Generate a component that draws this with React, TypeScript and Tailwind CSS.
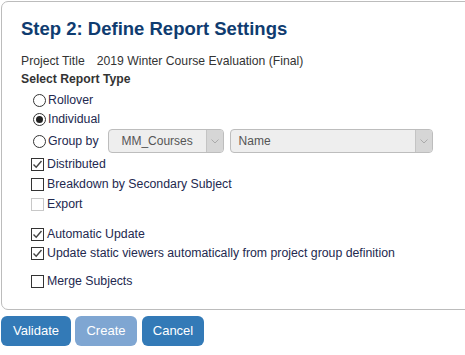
type Opt = { label: string; checked?: boolean; disabled?: boolean };

const font = { fontFamily: '"Liberation Sans", Arial, sans-serif' };

const Radio = ({ label, checked }: Opt) => (
  <div className="flex items-center h-[19px]">
    <span className="w-[13px] h-[13px] rounded-full border border-[#333] bg-white flex items-center justify-center">
      {checked && <span className="w-[7px] h-[7px] rounded-full bg-[#222]" />}
    </span>
    <span className="ml-[2px] text-[12.3px] text-[#23294f]">{label}</span>
  </div>
);

const Check = ({ label, checked, disabled }: Opt) => (
  <div className="flex items-center h-[19px]">
    <span
      className={
        disabled
          ? "w-[13px] h-[13px] border border-[#c8c8c8] bg-white"
          : "w-[13px] h-[13px] border border-[#333] bg-white flex items-center justify-center"
      }
    >
      {checked && (
        <svg width="11" height="11" viewBox="0 0 11 11">
          <path d="M1.5 5.5 L4.2 8.2 L9.5 2" fill="none" stroke="#444" strokeWidth="1.4" />
        </svg>
      )}
    </span>
    <span className="ml-[3px] text-[12.3px] text-[#23294f]">{label}</span>
  </div>
);

const Select = ({ value, width, center }: { value: string; width: string; center?: boolean }) => (
  <div className={`${width} h-[24px] flex rounded-[4px] border border-[#bdbdbd] bg-[#eeeeee] overflow-hidden`}>
    <span className={center ? "flex-1 flex items-center justify-center text-[12px] text-[#555]" : "flex-1 flex items-center pl-[8px] text-[12px] text-[#555]"}>
      {value}
    </span>
    <span className="w-[17px] bg-[#d6d6d6] border-l border-[#c4c4c4] flex items-center justify-center">
      <svg width="8" height="5" viewBox="0 0 8 5">
        <path d="M0.5 0.5 L4 4 L7.5 0.5" fill="none" stroke="#aaa" strokeWidth="1" />
      </svg>
    </span>
  </div>
);

export default function App() {
  return (
    <div className="w-[465px] h-[355px] bg-white overflow-hidden" style={font}>
      <div className="ml-[1px] mt-[1px] w-[480px] h-[309px] border border-[#bcbcbc] rounded-[7px] pl-[19px] pt-[14px]">
        <h1 className="text-[18.5px] leading-[26px] font-bold text-[#0f3c70]">Step 2: Define Report Settings</h1>
        <div className="flex items-center h-[18px] mt-[10px] text-[12.2px] text-[#333]">
          <span>Project Title</span>
          <span className="ml-[12px]">2019 Winter Course Evaluation (Final)</span>
        </div>
        <div className="h-[18px] flex items-center text-[12.2px] font-bold text-[#333]">Select Report Type</div>
        <div className="pl-[12px] mt-[3px]">
          <Radio label="Rollover" />
          <Radio label="Individual" checked />
          <div className="flex items-center h-[24px]">
            <Radio label="Group by" />
            <div className="ml-[9px] flex gap-[6px]">
              <Select value="MM_Courses" width="w-[116px]" center />
              <Select value="Name" width="w-[203px]" />
            </div>
          </div>
        </div>
        <div className="pl-[10px] mt-[1px]">
          <div className="flex flex-col">
            <div className="h-[20px] flex items-center"><Check label="Distributed" checked /></div>
            <div className="h-[20px] flex items-center"><Check label="Breakdown by Secondary Subject" /></div>
            <div className="h-[20px] flex items-center"><Check label="Export" disabled /></div>
          </div>
          <div className="mt-[11px]">
            <Check label="Automatic Update" checked />
            <Check label="Update static viewers automatically from project group definition" checked />
          </div>
          <div className="mt-[8px] h-[20px] flex items-center">
            <Check label="Merge Subjects" />
          </div>
        </div>
      </div>
      <div className="flex gap-[4px] mt-[6px] ml-[1px]">
        <button className="w-[70px] h-[30px] rounded-[6px] bg-[#337ab7] text-white text-[13px]">Validate</button>
        <button className="w-[62px] h-[30px] rounded-[6px] bg-[#7fa6d2] text-white text-[13px]">Create</button>
        <button className="w-[62px] h-[30px] rounded-[6px] bg-[#337ab7] text-white text-[13px] ml-[1px]">Cancel</button>
      </div>
    </div>
  );
}
